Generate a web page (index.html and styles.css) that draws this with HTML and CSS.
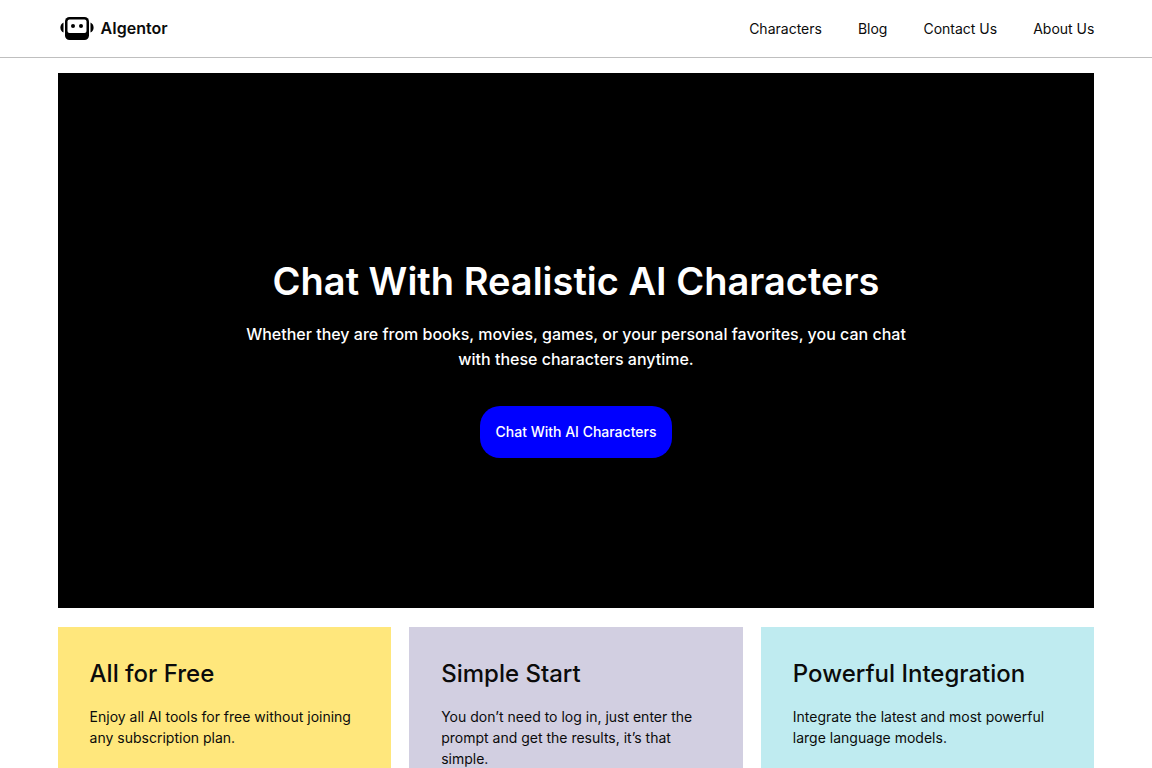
FILE: index.html
```html
<!DOCTYPE html>
<html lang="en">

<head>
    <meta charset="UTF-8">
    <meta name="viewport" content="width=device-width, initial-scale=1.0">
    <title>AIgentor</title>
    <link rel="stylesheet" href="styles.css">
</head>

<body>
    <header class="header">
        <a href="#" class="logo">
            <svg class="logo-icon" viewBox="0 0 34 24" aria-hidden="true">
                <path d="M3.500 5.500 Q0.400 7 0.400 10.500 Q0.400 14 3.500 15.500 Z" />
                <path d="M30.500 5.500 Q33.600 7 33.600 10.500 Q33.600 14 30.500 15.500 Z" />
                <rect x="5" y="0" width="24" height="23" rx="4.500" />
                <rect class="face" x="7.500" y="2.500" width="19" height="13.500" rx="2" />
                <circle cx="13" cy="9" r="2" />
                <circle cx="21" cy="9" r="2" />
            </svg>
            <span>AIgentor</span>
        </a>
        <nav class="nav">
            <a href="#">Characters</a>
            <a href="#">Blog</a>
            <a href="#">Contact Us</a>
            <a href="#">About Us</a>
        </nav>
    </header>

    <main class="main">
        <section class="hero">
            <h1>Chat With Realistic AI Characters</h1>
            <p>Whether they are from books, movies, games, or your personal favorites, you can chat with these characters anytime.</p>
            <button type="button" class="hero-btn">Chat With AI Characters</button>
        </section>

        <section class="cards">
            <div class="card yellow">
                <h2>All for Free</h2>
                <p>Enjoy all AI tools for free without joining any subscription plan.</p>
            </div>
            <div class="card purple">
                <h2>Simple Start</h2>
                <p>You don’t need to log in, just enter the prompt and get the results, it’s that simple.</p>
            </div>
            <div class="card blue">
                <h2>Powerful Integration</h2>
                <p>Integrate the latest and most powerful large language models.</p>
            </div>
        </section>
    </main>
</body>

</html>
```

FILE: styles.css
```css
* {
    box-sizing: border-box;
    margin: 0;
    padding: 0;
}

body {
    background-color: white;
    color: #0b0b0b;
    font-family: Inter, Arial, sans-serif;
}

a {
    color: inherit;
    text-decoration: none;
}

.header {
    display: flex;
    justify-content: space-between;
    align-items: center;
    padding: 16px 5%;
    border-bottom: 1px solid #bfbfbf;
}

.logo {
    display: flex;
    align-items: center;
    gap: 7px;
    padding-left: 2px;
    font-size: 16px;
    line-height: 25px;
    font-weight: 600;
}

.logo-icon {
    width: 34px;
    height: 24px;
}

.logo-icon .face {
    fill: white;
}

.nav {
    display: flex;
    gap: 36px;
    font-size: 14px;
    line-height: 24px;
}

.main {
    padding: 15px 5%;
}

.hero {
    display: flex;
    flex-direction: column;
    align-items: center;
    padding: 180px 16px 150px;
    background-color: black;
    color: white;
    text-align: center;
}

.hero h1 {
    font-size: 38px;
    line-height: 56px;
    font-weight: 600;
}

.hero p {
    max-width: 670px;
    margin-top: 13px;
    font-size: 16px;
    line-height: 25px;
    font-weight: 500;
}

.hero-btn {
    margin-top: 34px;
    padding: 16px;
    background-color: blue;
    color: white;
    border: none;
    border-radius: 20px;
    font-family: inherit;
    font-size: 14px;
    line-height: 20px;
    font-weight: 500;
    cursor: pointer;
}

.cards {
    display: grid;
    grid-template-columns: repeat(3, 1fr);
    gap: 18px;
    margin-top: 19px;
}

.card {
    padding: 32px;
}

.card h2 {
    font-size: 24px;
    line-height: 29px;
    font-weight: 500;
}

.card p {
    margin-top: 18px;
    font-size: 14px;
    line-height: 21px;
}

.yellow {
    background-color: #ffe77c;
}

.purple {
    background-color: #d2cfe1;
}

.blue {
    background-color: #bfebf0;
}
```
